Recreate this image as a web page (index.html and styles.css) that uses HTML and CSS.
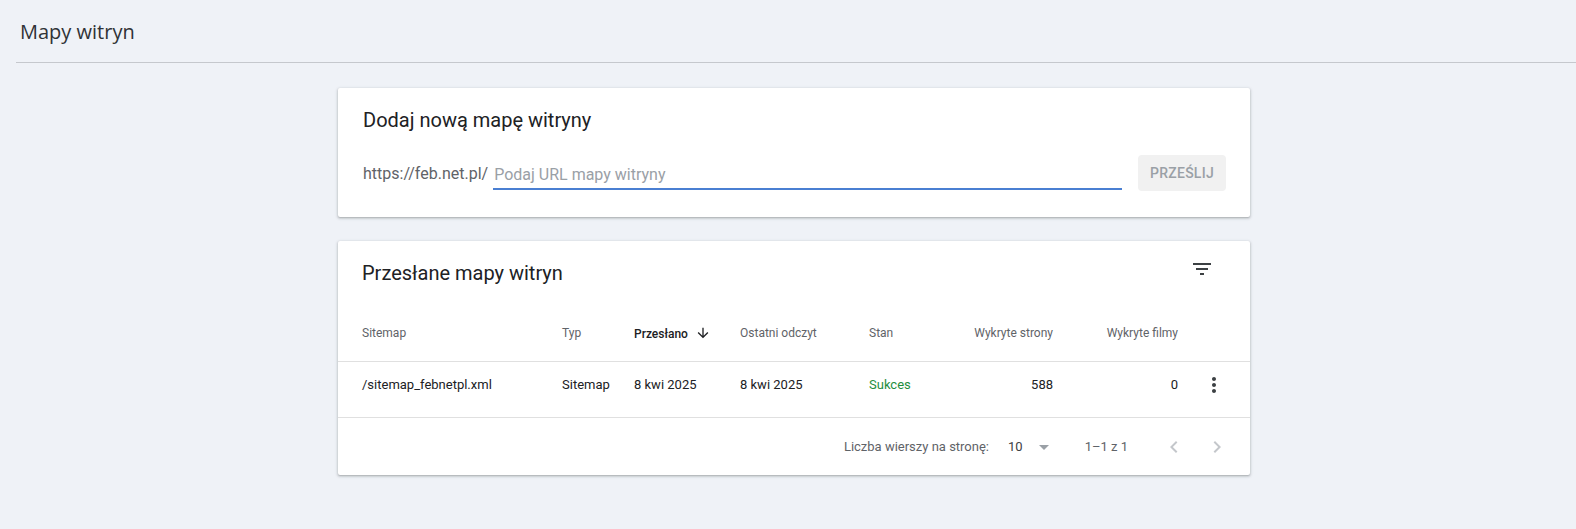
FILE: index.html
```html
<!DOCTYPE html>
<html lang="pl">

<head>
    <meta charset="utf-8">
    <title>Mapy witryn</title>
    <link rel="stylesheet" href="styles.css">
</head>

<body>

    <div class="page-header">
        <h1 class="page-title">Mapy witryn</h1>
    </div>

    <div class="content">

        <!-- Add sitemap card -->
        <div class="card add-card">
            <h2 class="card-title">Dodaj nową mapę witryny</h2>
            <div class="add-row">
                <span class="url-prefix">https://feb.net.pl/</span>
                <input class="url-input" type="text" placeholder="Podaj URL mapy witryny">
                <button class="submit-btn" disabled>PRZEŚLIJ</button>
            </div>
        </div>

        <!-- Submitted sitemaps card -->
        <div class="card list-card">
            <div class="list-header">
                <h2 class="card-title">Przesłane mapy witryn</h2>
                <button class="icon-btn filter-btn" title="Filtr">
                    <svg width="24" height="24" viewBox="0 0 24 24">
                        <path d="M10 18h4v-2h-4v2zM3 6v2h18V6H3zm3 7h12v-2H6v2z" fill="#3c4043" />
                    </svg>
                </button>
            </div>

            <table class="sitemaps">
                <colgroup>
                    <col class="c-sitemap">
                    <col class="c-type">
                    <col class="c-sent">
                    <col class="c-read">
                    <col class="c-status">
                    <col class="c-pages">
                    <col class="c-videos">
                    <col class="c-actions">
                </colgroup>
                <tr>
                    <th>Sitemap</th>
                    <th>Typ</th>
                    <th class="sorted">Przesłano
                        <svg class="sort-arrow" width="16" height="16" viewBox="0 0 24 24">
                            <path d="M20 12l-1.41-1.41L13 16.17V4h-2v12.17l-5.58-5.59L4 12l8 8 8-8z" fill="#202124" />
                        </svg>
                    </th>
                    <th>Ostatni odczyt</th>
                    <th>Stan</th>
                    <th class="num">Wykryte strony</th>
                    <th class="num">Wykryte filmy</th>
                    <th></th>
                </tr>
                <tr>
                    <td>/sitemap_febnetpl.xml</td>
                    <td>Sitemap</td>
                    <td>8 kwi 2025</td>
                    <td>8 kwi 2025</td>
                    <td class="ok">Sukces</td>
                    <td class="num">588</td>
                    <td class="num">0</td>
                    <td class="actions">
                        <svg width="24" height="24" viewBox="0 0 24 24">
                            <path d="M12 8c1.1 0 2-.9 2-2s-.9-2-2-2-2 .9-2 2 .9 2 2 2zm0 2c-1.1 0-2 .9-2 2s.9 2 2 2 2-.9 2-2-.9-2-2-2zm0 6c-1.1 0-2 .9-2 2s.9 2 2 2 2-.9 2-2-.9-2-2-2z" fill="#3c4043" />
                        </svg>
                    </td>
                </tr>
            </table>

            <div class="pager">
                <span class="pager-label">Liczba wierszy na stronę:</span>
                <span class="rows-select">
                    <span class="rows-value">10</span>
                    <svg width="24" height="24" viewBox="0 0 24 24">
                        <path d="M7 10l5 5 5-5z" fill="#9aa0a6" />
                    </svg>
                </span>
                <span class="pager-range">1–1 z 1</span>
                <span class="pager-nav">
                    <svg width="24" height="24" viewBox="0 0 24 24">
                        <path d="M15.41 7.41L14 6l-6 6 6 6 1.41-1.41L10.83 12z" fill="#c4c7cb" />
                    </svg>
                    <svg width="24" height="24" viewBox="0 0 24 24">
                        <path d="M10 6L8.59 7.41 13.17 12l-4.58 4.59L10 18l6-6z" fill="#c4c7cb" />
                    </svg>
                </span>
            </div>
        </div>

    </div>

</body>

</html>
```

FILE: styles.css
```css
body {
    margin: 0;
    background-color: #eff2f7;
    font-family: Roboto, "Liberation Sans", Arial, sans-serif;
    color: #202124;
}

/* Page header */
.page-header {
    height: 62px;
    margin-left: 16px;
    padding-left: 4px;
    display: flex;
    align-items: center;
    border-bottom: 1px solid #c5c8cd;
}

.page-title {
    margin: 0;
    font-family: "Open Sans", Roboto, sans-serif;
    font-size: 20px;
    font-weight: 400;
    color: #303336;
}

/* Cards */
.content {
    width: 912px;
    margin: 25px 0 0 338px;
}

.card {
    background-color: white;
    border-radius: 2px;
    box-shadow: 0 1px 2px rgba(60, 64, 67, 0.3), 0 1px 3px 1px rgba(60, 64, 67, 0.12);
    margin-bottom: 24px;
}

.card-title {
    margin: 0;
    font-size: 20px;
    line-height: 24px;
    font-weight: 400;
    color: #202124;
}

.add-card {
    padding: 20px 24px 26px 25px;
}

.add-row {
    display: flex;
    align-items: center;
    height: 36px;
    margin-top: 23px;
}

.url-prefix {
    font-size: 16px;
    color: #5f6368;
    padding-top: 1px;
}

.url-input {
    flex: 1;
    height: 32px;
    margin: 0 16px 0 5px;
    padding: 3px 0 0 1px;
    box-sizing: border-box;
    border: none;
    border-bottom: 2px solid #4a7fd2;
    font-family: inherit;
    font-size: 16px;
    color: #202124;
    outline: none;
    position: relative;
    top: 1px;
}

.url-input::placeholder {
    color: #9aa0a6;
}

.submit-btn {
    height: 36px;
    width: 88px;
    border: none;
    border-radius: 4px;
    background-color: #f1f1f1;
    color: #9aa0a6;
    font-family: inherit;
    font-size: 14px;
    font-weight: 500;
    letter-spacing: 0.25px;
}

/* Submitted sitemaps */
.list-header {
    height: 64px;
    box-sizing: border-box;
    padding: 20px 24px 0 24px;
    display: flex;
    justify-content: space-between;
    align-items: flex-start;
}

.icon-btn {
    border: none;
    background: none;
    padding: 0;
    width: 24px;
    height: 24px;
    cursor: pointer;
}

.filter-btn {
    margin: -4px 12px 0 0;
}

.sitemaps {
    width: 100%;
    border-collapse: collapse;
    table-layout: fixed;
}

.c-sitemap { width: 224px; }
.c-type { width: 72px; }
.c-sent { width: 106px; }
.c-read { width: 129px; }
.c-status { width: 96px; }
.c-pages { width: 88px; }
.c-videos { width: 125px; }
.c-actions { width: 72px; }

th,
td {
    padding: 0;
    text-align: left;
    white-space: nowrap;
    border-bottom: 1px solid #e0e0e0;
}

th:first-child,
td:first-child {
    padding-left: 24px;
}

th {
    height: 56px;
    font-size: 12px;
    font-weight: 400;
    color: #5f6368;
}

th.sorted {
    font-weight: 500;
    color: #202124;
}

.sort-arrow {
    vertical-align: -3px;
    margin-left: 4px;
}

td {
    height: 56px;
    padding-bottom: 10px;
    box-sizing: border-box;
    font-size: 13px;
    color: #202124;
}

.num {
    text-align: right;
}

.ok {
    color: #1e8e3e;
}

.actions {
    text-align: center;
}

.actions svg {
    vertical-align: middle;
}

/* Pager */
.pager {
    height: 57px;
    display: flex;
    justify-content: flex-end;
    align-items: center;
    padding-right: 21px;
    font-size: 13px;
    color: #5f6368;
}

.rows-select {
    display: flex;
    align-items: center;
    margin-left: 19px;
}

.rows-value {
    font-size: 13px;
    color: #3c4043;
    margin-right: 9px;
}

.pager-range {
    margin-left: 29px;
}

.pager-nav {
    display: flex;
    gap: 19px;
    margin-left: 34px;
}
```
